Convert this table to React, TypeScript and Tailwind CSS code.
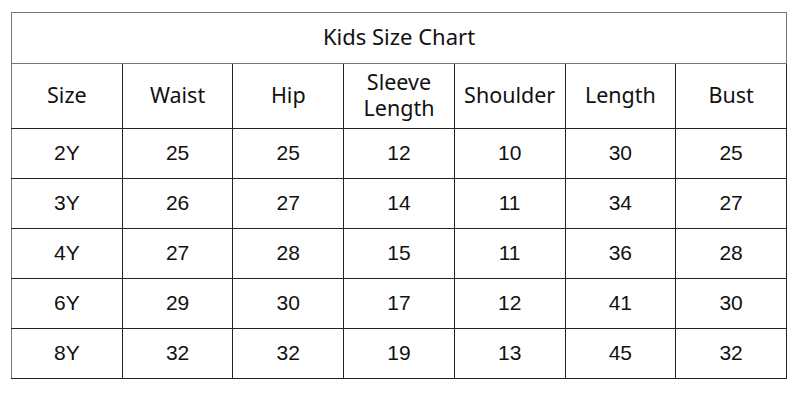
const headers = ['Size', 'Waist', 'Hip', 'Sleeve Length', 'Shoulder', 'Length', 'Bust']

const rows = [
  ['2Y', '25', '25', '12', '10', '30', '25'],
  ['3Y', '26', '27', '14', '11', '34', '27'],
  ['4Y', '27', '28', '15', '11', '36', '28'],
  ['6Y', '29', '30', '17', '12', '41', '30'],
  ['8Y', '32', '32', '19', '13', '45', '32'],
]

export default function App() {
  return (
    <div className="w-[800px] h-[400px] bg-white pt-[12px] pl-[11px]">
      <table className="w-[776px] border-collapse table-fixed text-[#111]">
        <thead>
          <tr className="h-[51px]">
            <th
              colSpan={7}
              className="border border-[#777] font-normal text-[22px] font-['Noto_Sans',sans-serif] pb-[4px]"
            >
              Kids Size Chart
            </th>
          </tr>
          <tr className="h-[65px]">
            {headers.map((h) => (
              <th
                key={h}
                className="border border-[#222] first:border-l-[#777] font-normal text-[21.5px] leading-[26px] font-['Noto_Sans',sans-serif] pb-[2px]"
              >
                {h === 'Sleeve Length' ? (
                  <>
                    Sleeve
                    <br />
                    Length
                  </>
                ) : (
                  h
                )}
              </th>
            ))}
          </tr>
        </thead>
        <tbody>
          {rows.map((r) => (
            <tr key={r[0]} className="h-[50px]">
              {r.map((c, i) => (
                <td
                  key={i}
                  className="border border-[#222] first:border-l-[#777] text-center text-[21px] font-['Liberation_Sans',Arial,sans-serif] pb-[2px]"
                >
                  {c}
                </td>
              ))}
            </tr>
          ))}
        </tbody>
      </table>
    </div>
  )
}
